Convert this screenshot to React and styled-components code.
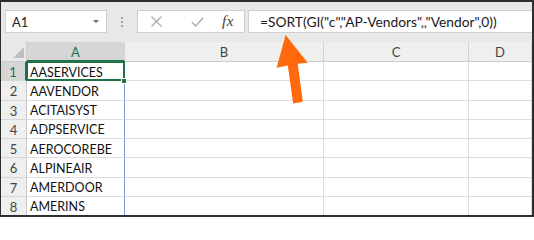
import React from 'react';
import styled, { createGlobalStyle } from 'styled-components';

const Global = createGlobalStyle`
  html, body { margin: 0; padding: 0; background: #fff; overflow: hidden; }
  body { font-family: Lato, "Liberation Sans", sans-serif; }
`;

const Frame = styled.div`
  position: relative;
  width: 534px;
  height: 217px;
  box-sizing: border-box;
  border: 2px solid #2e2e2e;
  border-left-width: 1px;
  background: #fff;
  overflow: hidden;
  display: flex;
  flex-direction: column;
`;

const Toolbar = styled.div`
  height: 40px;
  flex: none;
  box-sizing: border-box;
  background: #e8e8e8;
  display: flex;
  align-items: flex-start;
  padding: 8px 0 0 4px;
`;

const Box = styled.div`
  height: 23px;
  box-sizing: border-box;
  background: #fff;
  border: 1px solid #cfcfcf;
  display: flex;
  align-items: center;
`;

const NameBox = styled(Box)`
  width: 102px;
  padding: 0 6px 0 6px;
  justify-content: space-between;
  font-size: 13px;
  color: #222;
`;

const Caret = styled.span`
  width: 0;
  height: 0;
  border-left: 3px solid transparent;
  border-right: 3px solid transparent;
  border-top: 3px solid #6b6b6b;
  margin-right: 1px;
`;

const Divider = styled.div`
  width: 30px;
  height: 23px;
  display: flex;
  flex-direction: column;
  align-items: center;
  justify-content: center;
  gap: 2px;
`;

const Dot = styled.span`
  width: 2px;
  height: 2px;
  background: #a3a3a3;
`;

const ButtonsBox = styled(Box)`
  width: 108px;
`;

const Slot = styled.div`
  width: 20px;
  display: flex;
  justify-content: center;
  align-items: center;
  margin-left: ${p => p.$ml}px;
`;

const Fx = styled.span`
  font-family: "Liberation Serif", serif;
  font-style: italic;
  font-size: 15px;
  color: #3f3f3f;
  letter-spacing: 0.5px;
  line-height: 1;
`;

const FormulaBox = styled(Box)`
  flex: 1;
  margin-left: 3px;
  border-right: none;
  padding-left: 11px;
  font-size: 13.8px;
  color: #1a1a1a;
  white-space: nowrap;
`;

const Grid = styled.div`
  flex: 1;
  display: grid;
  grid-template-columns: 26px 98px 199px 145px 1fr;
  grid-template-rows: 20px repeat(8, 19.25px);
`;

const Corner = styled.div`
  background: #e9e9e9;
  border-right: 1px solid #cdcdcd;
  border-bottom: 1px solid #cdcdcd;
  box-sizing: border-box;
  display: flex;
  align-items: flex-end;
  justify-content: flex-end;
  padding: 0 2px 3px 0;
`;

const ColHeader = styled.div`
  box-sizing: border-box;
  background: ${p => (p.$active ? '#d6d6d6' : '#efefef')};
  color: ${p => (p.$active ? '#217346' : '#444')};
  border-right: 1px solid #d3d3d3;
  border-bottom: ${p => (p.$active ? '2px solid #217346' : '1px solid #cdcdcd')};
  display: flex;
  align-items: center;
  justify-content: center;
  font-size: 13px;
  padding-top: 1px;
`;

const RowHeader = styled.div`
  box-sizing: border-box;
  background: ${p => (p.$active ? '#d6d6d6' : '#efefef')};
  color: ${p => (p.$active ? '#217346' : '#444')};
  border-right: ${p => (p.$active ? '2px solid #217346' : '1px solid #cdcdcd')};
  border-bottom: 1px solid #d6d6d6;
  display: flex;
  align-items: center;
  justify-content: center;
  font-size: 13px;
  padding-top: 2px;
`;

const Cell = styled.div`
  position: relative;
  box-sizing: border-box;
  border-right: 1px solid ${p => (p.$spill ? '#7197da' : '#dcdcdc')};
  border-bottom: 1px solid #dcdcdc;
  display: flex;
  align-items: center;
  padding: 2px 0 0 3px;
  font-size: 12.5px;
  color: #111;
  white-space: nowrap;
  ${p =>
    p.$selected &&
    `
    z-index: 2;
    &::after {
      content: '';
      position: absolute;
      top: -1px; left: -1px; right: -1px; bottom: -1px;
      border: 2px solid #217346;
      pointer-events: none;
    }
  `}
`;

const FillHandle = styled.span`
  position: absolute;
  right: -3px;
  bottom: -4px;
  width: 4px;
  height: 4px;
  background: #217346;
  border: 1px solid #fff;
  z-index: 3;
`;

const Overlay = styled.svg`
  position: absolute;
  left: -1px;
  top: -2px;
  width: 534px;
  height: 217px;
  pointer-events: none;
  z-index: 5;
`;

const columns = ['A', 'B', 'C', 'D'];
const vendors = [
  'AASERVICES',
  'AAVENDOR',
  'ACITAISYST',
  'ADPSERVICE',
  'AEROCOREBE',
  'ALPINEAIR',
  'AMERDOOR',
  'AMERINS',
];

export default function App() {
  return (
    <>
      <Global />
      <Frame>
        <Toolbar>
          <NameBox>
            <span>A1</span>
            <Caret />
          </NameBox>
          <Divider>
            <Dot />
            <Dot />
            <Dot />
          </Divider>
          <ButtonsBox>
            <Slot $ml={8}>
              <svg width="11" height="11" viewBox="0 0 11 11">
                <path d="M0.5 0.5 L10.5 10.5 M10.5 0.5 L0.5 10.5" stroke="#ababab" strokeWidth="1.2" fill="none" />
              </svg>
            </Slot>
            <Slot $ml={21}>
              <svg width="13" height="10" viewBox="0 0 13 10">
                <path d="M0.8 5.2 L4.6 9 L12.3 0.8" stroke="#ababab" strokeWidth="1.3" fill="none" />
              </svg>
            </Slot>
            <Slot $ml={11}>
              <Fx>fx</Fx>
            </Slot>
          </ButtonsBox>
          <FormulaBox>=SORT(GI("c","AP-Vendors",,"Vendor",0))</FormulaBox>
        </Toolbar>
        <Grid>
          <Corner>
            <svg width="11" height="11" viewBox="0 0 11 11">
              <path d="M11 0 L11 11 L0 11 Z" fill="#bfbfbf" />
            </svg>
          </Corner>
          {columns.map(c => (
            <ColHeader key={c} $active={c === 'A'}>
              {c}
            </ColHeader>
          ))}
          {vendors.map((v, i) => (
            <React.Fragment key={v}>
              <RowHeader $active={i === 0}>{i + 1}</RowHeader>
              <Cell $selected={i === 0} $spill={i > 0}>
                {v}
                {i === 0 && <FillHandle />}
              </Cell>
              <Cell />
              <Cell />
              <Cell />
            </React.Fragment>
          ))}
        </Grid>
        <Overlay viewBox="0 0 534 217">
          <polygon
            points="285.6,35 307.7,62.7 297.7,63.8 302.8,101.8 293.2,103.4 287.8,65.4 276.6,67.8"
            fill="#ff690b"
          />
        </Overlay>
      </Frame>
    </>
  );
}
